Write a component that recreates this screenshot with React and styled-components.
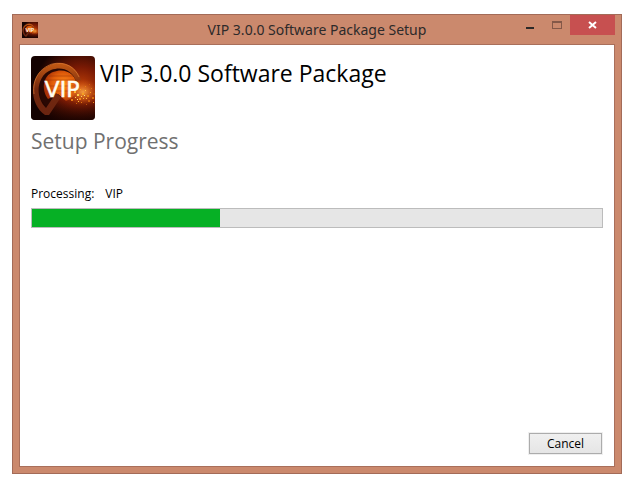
import { useId } from "react"
import styled, { createGlobalStyle } from "styled-components"

const GlobalStyle = createGlobalStyle`
  * {
    box-sizing: border-box;
  }
  body {
    margin: 0;
    background-color: white;
    font-family: "Open Sans", "Noto Sans", sans-serif;
    color: black;
  }
`

const Desktop = styled.div`
  min-height: 100vh;
  display: flex;
  padding: 14px 18px 16px 12px;
`

const Window = styled.main`
  flex: 1;
  display: flex;
  flex-direction: column;
  border: 1px solid #a36b58;
  background-color: #cb896d;
`

const TitleBar = styled.header`
  height: 29px;
  padding: 0 6px;
  display: grid;
  grid-template-columns: 1fr auto 1fr;
  align-items: center;
`

const WindowIcon = styled.span`
  display: flex;
  padding-left: 3px;
`

const WindowTitle = styled.span`
  font-family: "Noto Sans", sans-serif;
  font-size: 14px;
  line-height: 20px;
  color: #2d2a2a;
`

const Controls = styled.div`
  align-self: start;
  justify-self: end;
  display: flex;
`

const ControlButton = styled.button`
  width: ${(props) => (props.$close ? 45 : 27)}px;
  height: 20px;
  padding: 0;
  border: none;
  display: flex;
  align-items: center;
  justify-content: center;
  background-color: ${(props) => (props.$close ? "#c75050" : "transparent")};
`

const Client = styled.section`
  flex: 1;
  display: flex;
  flex-direction: column;
  margin: 0 6px 6px;
  padding: 11px;
  border: 1px solid #a96f5b;
  background-color: white;
`

const Brand = styled.div`
  display: flex;
  gap: 5px;
`

const ProductName = styled.h1`
  margin: 0;
  font-size: 23px;
  line-height: 34px;
  font-weight: 400;
`

const StepName = styled.h2`
  margin: 4px 0 0;
  font-size: 21px;
  line-height: 34px;
  font-weight: 400;
  color: #707070;
`

const Status = styled.div`
  display: flex;
  gap: 11px;
  margin: 28px 0 6px;
  font-size: 12px;
  line-height: 16px;
`

const ProgressBar = styled.progress`
  appearance: none;
  display: block;
  width: 100%;
  height: 20px;
  border: 1px solid #bcbcbc;
  background-color: #e6e6e6;

  &::-webkit-progress-bar {
    background-color: #e6e6e6;
  }
  &::-webkit-progress-value {
    background-color: #06b025;
  }
`

const Footer = styled.footer`
  display: flex;
  justify-content: flex-end;
  margin-top: auto;
`

const CancelButton = styled.button`
  width: 75px;
  height: 23px;
  padding: 0;
  border: 1px solid #efefef;
  background-color: #efefef;
  background-image: linear-gradient(#f0f0f0, #e5e5e5);
  box-shadow: inset 0 0 0 1px #acacac;
  font-family: inherit;
  font-size: 12px;
  line-height: 16px;
  color: black;
`

// glowing dial with sparks flying off to the right
const sparks = [
  [43, 35, 2, "#ffb52e"], [46, 38, 2, "#ffd04a"], [49, 33, 1, "#ff9a1c"],
  [51, 37, 2, "#f7a021"], [54, 34, 1, "#ffc23a"], [56, 39, 2, "#e87f12"],
  [59, 36, 1, "#f99a1e"], [61, 41, 2, "#d9700f"], [48, 42, 2, "#f08a14"],
  [44, 41, 1, "#ffd85c"], [52, 42, 1, "#ffb52e"], [57, 44, 2, "#c95d0a"],
  [50, 46, 1, "#e3780f"], [62, 46, 1, "#ef8a18"], [54, 30, 1, "#e87f12"],
  [58, 28, 1, "#c95d0a"], [41, 44, 1, "#ffe27a"], [40, 43, 2, "#e3780f"],
  [47, 45, 1, "#ffc23a"], [60, 32, 1, "#d9700f"], [53, 39, 1, "#ffe27a"],
  [45, 47, 1, "#c95d0a"], [55, 48, 1, "#b84d08"], [62, 37, 2, "#b84d08"],
  [46, 43, 1, "#ffe27a"], [50, 40, 1, "#ffd85c"], [55, 42, 1, "#ffc23a"],
]

const VipLogo = ({ size, radius = 0, label }) => {
  const id = useId()
  return (
    <svg width={size} height={size} viewBox="0 0 64 64" role="img" aria-label={label}>
      <defs>
        <radialGradient id={`${id}back`} cx="0.78" cy="0.5" r="0.72">
          <stop offset="0" stopColor="#c24208" />
          <stop offset="0.45" stopColor="#7a1a04" />
          <stop offset="1" stopColor="#140201" />
        </radialGradient>
        <radialGradient id={`${id}core`} cx="0.6" cy="0.45" r="0.6">
          <stop offset="0" stopColor="#ff8c1c" />
          <stop offset="0.6" stopColor="#e05c0a" />
          <stop offset="1" stopColor="#a83006" />
        </radialGradient>
        <linearGradient id={`${id}ring`} x1="0" y1="0" x2="0" y2="1">
          <stop offset="0" stopColor="#c45a14" />
          <stop offset="0.5" stopColor="#74280e" />
          <stop offset="1" stopColor="#6a2410" />
        </linearGradient>
        <radialGradient id={`${id}flare`}>
          <stop offset="0" stopColor="#ffb04a" stopOpacity="0.85" />
          <stop offset="1" stopColor="#d9500a" stopOpacity="0" />
        </radialGradient>
        <linearGradient id={`${id}shade`} x1="0" y1="0" x2="0" y2="1">
          <stop offset="0.68" stopColor="#140201" stopOpacity="0" />
          <stop offset="1" stopColor="#140201" stopOpacity="0.8" />
        </linearGradient>
        <clipPath id={`${id}clip`}>
          <rect width="64" height="64" rx={radius} />
        </clipPath>
      </defs>
      <g clipPath={`url(#${id}clip)`}>
        <rect width="64" height="64" fill={`url(#${id}back)`} />
        <rect width="64" height="64" fill={`url(#${id}shade)`} />
        <path d="M15 50 C5 40 5 22 17 15 C28 8 43 13 47 27 L43 38 L26 42 Z" fill="#2a0803" />
        <path d="M17 43 C10 33 12 20 22 16 C34 11 46 18 46 31 C46 38 41 43 35 45 L27 38 Z" fill={`url(#${id}core)`} />
        <path d="M18 20H42M15 24H45M15 30H46M16 35H46" stroke="#8a2a06" opacity="0.4" />
        <path
          d="M14 59 C-3 47 -2 19 17 10 C30 3 45 9 50 24 L45 25 C41 14 31 10 20 14 C5 20 4 42 15 52 L25 37 L30 41 L18 59 Z"
          fill={`url(#${id}ring)`}
        />
        <path d="M3 38 C1 23 9 12 21 8 C34 5 44 11 48 21" fill="none" stroke="#e8843a" opacity="0.6" />
        <ellipse cx="52" cy="36" rx="17" ry="13" fill={`url(#${id}flare)`} />
        {sparks.map(([x, y, s, color]) => (
          <rect key={`${x}-${y}`} x={x} y={y} width={s} height={s} fill={color} />
        ))}
        <text
          x="31"
          y="41"
          textAnchor="middle"
          fontFamily="DejaVu Sans, sans-serif"
          fontSize="22"
          fill="#fffdf0"
          stroke="#fffdf0"
          strokeWidth="0.5"
        >
          VIP
        </text>
      </g>
    </svg>
  )
}

const App = () => {
  return (
    <>
      <GlobalStyle />
      <Desktop>
        <Window>
          <TitleBar>
            <WindowIcon>
              <VipLogo size={16} label="VIP" />
            </WindowIcon>
            <WindowTitle>VIP 3.0.0 Software Package Setup</WindowTitle>
            <Controls>
              <ControlButton type="button" aria-label="Minimize">
                <svg width="8" height="20">
                  <rect y="12" width="8" height="2" fill="#2b2928" />
                </svg>
              </ControlButton>
              <ControlButton type="button" aria-label="Maximize" disabled>
                <svg width="10" height="20" shapeRendering="crispEdges">
                  <path d="M0 6H10V14H0Z M1 8V13H9V8Z" fill="#845848" fillRule="evenodd" />
                </svg>
              </ControlButton>
              <ControlButton type="button" aria-label="Close" $close>
                <svg width="9" height="8">
                  <path d="M1 1L8 7M8 1L1 7" stroke="white" strokeWidth="2" />
                </svg>
              </ControlButton>
            </Controls>
          </TitleBar>
          <Client>
            <Brand>
              <VipLogo size={64} radius={4} label="VIP logo" />
              <ProductName>VIP 3.0.0 Software Package</ProductName>
            </Brand>
            <StepName>Setup Progress</StepName>
            <Status>
              <label htmlFor="progress">Processing:</label>
              <span>VIP</span>
            </Status>
            <ProgressBar id="progress" max={100} value={33} />
            <Footer>
              <CancelButton type="button">Cancel</CancelButton>
            </Footer>
          </Client>
        </Window>
      </Desktop>
    </>
  )
}

export default App
